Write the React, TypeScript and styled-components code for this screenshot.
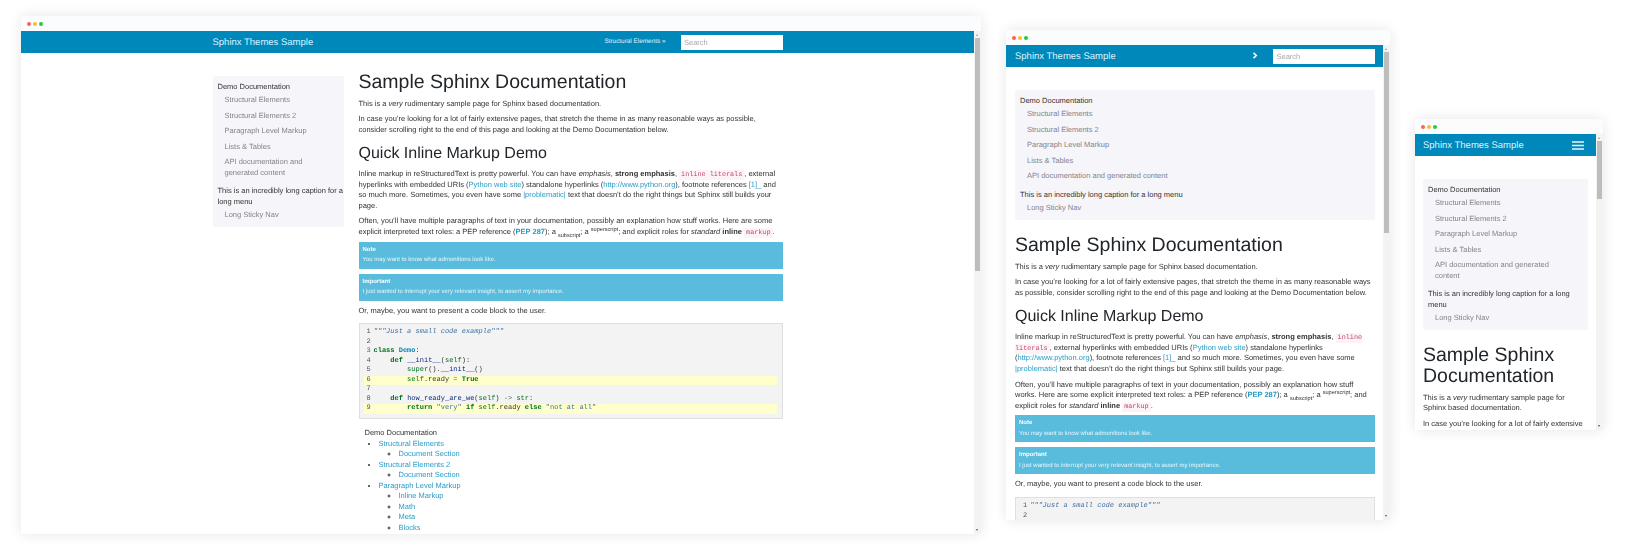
import * as React from "react"
import styled, { createGlobalStyle } from "styled-components"

type Layout = "desktop" | "tablet" | "phone"

const GlobalStyle = createGlobalStyle`
    html, body {
        margin: 0;
        padding: 0;
        background: #fff;
    }
    body {
        width: 1625px;
        height: 550px;
        overflow: hidden;
        font-family: "Liberation Sans", Arial, sans-serif;
        font-size: 7.5px;
        line-height: 10.5px;
        color: #333;
        text-rendering: geometricPrecision;
    }
`

const Stage = styled.div`
    display: flex;
    align-items: flex-start;
    gap: 25px;
    padding-left: 21px;
`

const Frame = styled.div<{ $top: number; $width: number; $height: number }>`
    flex: none;
    display: flex;
    flex-direction: column;
    margin-top: ${(p) => p.$top}px;
    width: ${(p) => p.$width}px;
    height: ${(p) => p.$height}px;
    background: #fff;
    border-radius: 4px 4px 0 0;
    box-shadow: 0 0 14px rgba(0, 0, 0, 0.1);
    overflow: hidden;
    filter: blur(0.3px);
`

const Chrome = styled.div`
    flex: none;
    display: flex;
    align-items: center;
    gap: 1.8px;
    height: 15px;
    padding-left: 6px;
    background: #fbfcfd;
`

const Dot = styled.span<{ $color: string }>`
    width: 4px;
    height: 4px;
    border-radius: 50%;
    background: ${(p) => p.$color};
`

const FrameBody = styled.div`
    flex: 1;
    min-height: 0;
    display: flex;
`

const Viewport = styled.div`
    flex: 1;
    min-width: 0;
    overflow: hidden;
`

const ScrollTrack = styled.div`
    flex: none;
    position: relative;
    width: 7px;
    background: #f3f3f3;
`

const ScrollThumb = styled.div<{ $height: number }>`
    margin: 7px 0 0 1px;
    width: 5px;
    height: ${(p) => p.$height}px;
    background: #bdbdbd;
`

const ScrollArrow = styled.span<{ $down?: boolean }>`
    position: absolute;
    left: 2px;
    ${(p) => (p.$down ? "bottom: 3px;" : "top: 3px;")}
    border-left: 1.5px solid transparent;
    border-right: 1.5px solid transparent;
    ${(p) => (p.$down ? "border-top: 2px solid #555;" : "border-bottom: 2px solid #999;")}
`

const Header = styled.header<{ $layout: Layout }>`
    height: 22px;
    padding: 0 8px;
    background: #0088ba;
    ${(p) => (p.$layout === "tablet" ? "padding: 0 8px 0 9px;" : "")}
`

const HeaderInner = styled.div<{ $layout: Layout }>`
    display: flex;
    align-items: center;
    height: 100%;
    ${(p) => (p.$layout === "desktop" ? "width: 570px; margin: 0 auto;" : "")}
`

const Brand = styled.a`
    margin: 2px auto 0 0;
    font-size: 9.5px;
    color: #d9f3ff;
`

const NavLink = styled.a`
    margin-right: 15px;
    font-size: 6.4px;
    color: #e3f4fb;
`

const Chevron = styled.svg`
    flex: none;
    margin: -2px 15px 0 0;
    width: 6px;
    height: 7px;
`

const SearchBox = styled.input`
    all: unset;
    box-sizing: border-box;
    width: 102px;
    height: 15px;
    padding: 0 3.5px;
    background: #fff;
    font-size: 7.5px;

    &::placeholder {
        color: #a8a8a8;
    }
`

const Burger = styled.svg`
    flex: none;
    width: 12px;
    height: 9px;
    margin-right: 4.5px;
`

const PageBody = styled.div<{ $layout: Layout }>`
    display: grid;
    grid-template-columns: minmax(0, 1fr);
    padding: 23px 8px 0;
    ${(p) => p.$layout === "desktop" && "grid-template-columns: 131px 424px; column-gap: 15px; width: 570px; margin: 0 auto; padding: 23px 0 0;"}
    ${(p) => p.$layout === "tablet" && "padding: 23px 8px 0 9px; row-gap: 19.5px;"}
    ${(p) => p.$layout === "phone" && "row-gap: 19.5px;"}
`

const Sidebar = styled.nav`
    align-self: start;
    padding: 6px 0 4px 5px;
    background: #f6f5fa;
    border-radius: 2px;
`

const Caption = styled.div`
    color: #333;
    margin-top: 5.7px;

    &:first-child {
        margin-top: 0;
    }
`

const SideItem = styled.a`
    display: block;
    padding: 2.5px 15px 2.5px 7px;
    color: #85838d;
`

const Main = styled.main`
    min-width: 0;
`

const H1 = styled.h1`
    margin: -4px 0 5.5px;
    font-size: 19.5px;
    line-height: 21px;
    font-weight: 400;
    color: #212529;
`

const H2 = styled.h2`
    margin: 9px 0 4.75px;
    font-size: 16px;
    line-height: 20px;
    font-weight: 400;
    color: #212529;
`

const P = styled.p`
    margin: 0 0 5.3px;
`

const Link = styled.a`
    color: #2a9dc7;
`

const PepLink = styled(Link)`
    font-weight: 700;
`

const Literal = styled.code`
    padding: 1px 2px;
    background: #fbf3f5;
    color: #c7456e;
    font-family: "Liberation Mono", monospace;
    font-size: 6.8px;
    line-height: 0;
    border-radius: 1px;
`

const Sub = styled.sub`
    font-size: 5.6px;
    line-height: 0;
`

const Sup = styled.sup`
    font-size: 5.6px;
    line-height: 0;
`

const Admonition = styled.div`
    box-sizing: border-box;
    height: 27px;
    margin: -1px 0 5px;
    padding: 3px 4px 0;
    background: #5abcdc;
    color: #e6f6fb;
    font-size: 6px;

    & + & {
        margin-top: 0;
    }
`

const AdmonitionTitle = styled.div`
    font-weight: 700;
    color: #f6fcfe;
`

const CodeBlock = styled.pre`
    margin: 7px 0 0;
    padding: 4.25px 5px 4.25px 4px;
    background: #f3f3f4;
    border: 1px solid #dfdfdf;
    font-family: "Liberation Mono", monospace;
    font-size: 7px;
    line-height: 9.5px;
    color: #333;
    overflow: hidden;
`

const CodeLine = styled.div<{ $hl?: boolean }>`
    white-space: pre;
    min-height: 9.5px;
    background: ${(p) => (p.$hl ? "#ffffcc" : "transparent")};
`

const LineNo = styled.span`
    display: inline-block;
    width: 7px;
    padding-left: 3px;
    color: #555;
`

const Kw = styled.span`
    color: #007020;
    font-weight: 700;
`

const Cls = styled.span`
    color: #0e84b5;
    font-weight: 700;
`

const Fn = styled.span`
    color: #06287e;
`

const Bi = styled.span`
    color: #007020;
`

const Str = styled.span`
    color: #4070a0;
`

const Doc = styled(Str)`
    font-style: italic;
`

const Op = styled.span`
    color: #666;
`

const Toc = styled.div`
    margin-top: 9px;
    padding-left: 6px;
`

const TocTitle = styled.div`
    color: #333;
`

const TocList = styled.ul`
    margin: 0;
    padding-left: 14px;
    list-style: disc;

    & & {
        padding-left: 20px;
        list-style: circle;
    }
`

const code = (
    <CodeBlock>
        <CodeLine><LineNo>1</LineNo><Doc>"""Just a small code example"""</Doc></CodeLine>
        <CodeLine><LineNo>2</LineNo></CodeLine>
        <CodeLine><LineNo>3</LineNo><Kw>class</Kw> <Cls>Demo</Cls>:</CodeLine>
        <CodeLine><LineNo>4</LineNo>    <Kw>def</Kw> <Fn>__init__</Fn>(<Bi>self</Bi>):</CodeLine>
        <CodeLine><LineNo>5</LineNo>        <Bi>super</Bi>().<Fn>__init__</Fn>()</CodeLine>
        <CodeLine $hl><LineNo>6</LineNo>        <Bi>self</Bi>.ready <Op>=</Op> <Kw>True</Kw></CodeLine>
        <CodeLine><LineNo>7</LineNo></CodeLine>
        <CodeLine><LineNo>8</LineNo>    <Kw>def</Kw> <Fn>how_ready_are_we</Fn>(<Bi>self</Bi>) <Op>-&gt;</Op> <Bi>str</Bi>:</CodeLine>
        <CodeLine $hl><LineNo>9</LineNo>        <Kw>return</Kw> <Str>"very"</Str> <Kw>if</Kw> <Bi>self</Bi>.ready <Kw>else</Kw> <Str>"not at all"</Str></CodeLine>
    </CodeBlock>
)

const Page: React.FC<{ layout: Layout }> = ({ layout }) => (
    <>
        <Header $layout={layout}>
            <HeaderInner $layout={layout}>
                <Brand>Sphinx Themes Sample</Brand>
                {layout === "desktop" && <NavLink>Structural Elements »</NavLink>}
                {layout === "tablet" && (
                    <Chevron viewBox="0 0 6 7">
                        <path d="M1.5 .8 4.3 3.5 1.5 6.2" fill="none" stroke="#f2fbff" strokeWidth="1.6" />
                    </Chevron>
                )}
                {layout === "phone" ? (
                    <Burger viewBox="0 0 12 9">
                        <path d="M0 1h12M0 4.5h12M0 8h12" stroke="#e6f6fc" strokeWidth="1.3" />
                    </Burger>
                ) : (
                    <SearchBox type="search" placeholder="Search" />
                )}
            </HeaderInner>
        </Header>
        <PageBody $layout={layout}>
            <Sidebar>
                <Caption>Demo Documentation</Caption>
                <SideItem>Structural Elements</SideItem>
                <SideItem>Structural Elements 2</SideItem>
                <SideItem>Paragraph Level Markup</SideItem>
                <SideItem>Lists &amp; Tables</SideItem>
                <SideItem>API documentation and generated content</SideItem>
                <Caption>This is an incredibly long caption for a long menu</Caption>
                <SideItem>Long Sticky Nav</SideItem>
            </Sidebar>
            <Main>
                <H1>Sample Sphinx Documentation</H1>
                <P>This is a <em>very</em> rudimentary sample page for Sphinx based documentation.</P>
                <P>In case you’re looking for a lot of fairly extensive pages, that stretch the theme in as many reasonable ways as possible, consider scrolling right to the end of this page and looking at the Demo Documentation below.</P>
                <H2>Quick Inline Markup Demo</H2>
                <P>
                    Inline markup in reStructuredText is pretty powerful. You can have <em>emphasis</em>, <strong>strong emphasis</strong>, <Literal>inline literals</Literal>, external hyperlinks with embedded URIs (<Link>Python web site</Link>) standalone hyperlinks (<Link>http://www.python.org</Link>), footnote references <Link>[1]_</Link> and so much more. Sometimes, you even have some <Link>|problematic|</Link> text that doesn’t do the right things but Sphinx still builds your page.
                </P>
                <P>
                    Often, you’ll have multiple paragraphs of text in your documentation, possibly an explanation how stuff works. Here are some explicit interpreted text roles: a PEP reference (<PepLink>PEP 287</PepLink>); a <Sub>subscript</Sub>; a <Sup>superscript</Sup>; and explicit roles for <em>standard</em> <strong>inline</strong> <Literal>markup</Literal>.
                </P>
                <Admonition>
                    <AdmonitionTitle>Note</AdmonitionTitle>
                    You may want to know what admonitions look like.
                </Admonition>
                <Admonition>
                    <AdmonitionTitle>Important</AdmonitionTitle>
                    I just wanted to interrupt your very relevant insight, to assert my importance.
                </Admonition>
                <P>Or, maybe, you want to present a code block to the user.</P>
                {code}
                <Toc>
                    <TocTitle>Demo Documentation</TocTitle>
                    <TocList>
                        <li><Link>Structural Elements</Link>
                            <TocList><li><Link>Document Section</Link></li></TocList>
                        </li>
                        <li><Link>Structural Elements 2</Link>
                            <TocList><li><Link>Document Section</Link></li></TocList>
                        </li>
                        <li><Link>Paragraph Level Markup</Link>
                            <TocList>
                                <li><Link>Inline Markup</Link></li>
                                <li><Link>Math</Link></li>
                                <li><Link>Meta</Link></li>
                                <li><Link>Blocks</Link></li>
                            </TocList>
                        </li>
                    </TocList>
                </Toc>
            </Main>
        </PageBody>
    </>
)

const BrowserWindow: React.FC<{
    layout: Layout
    top: number
    width: number
    height: number
    thumb: number
}> = ({ layout, top, width, height, thumb }) => (
    <Frame $top={top} $width={width} $height={height}>
        <Chrome>
            <Dot $color="#ff5f57" />
            <Dot $color="#ffbd2e" />
            <Dot $color="#28c940" />
        </Chrome>
        <FrameBody>
            <Viewport>
                <Page layout={layout} />
            </Viewport>
            <ScrollTrack>
                <ScrollArrow />
                <ScrollThumb $height={thumb} />
                <ScrollArrow $down />
            </ScrollTrack>
        </FrameBody>
    </Frame>
)

export default function App() {
    return (
        <>
            <GlobalStyle />
            <Stage>
                <BrowserWindow layout="desktop" top={16} width={960} height={518} thumb={233} />
                <BrowserWindow layout="tablet" top={30} width={384} height={490} thumb={181} />
                <BrowserWindow layout="phone" top={119} width={188} height={311} thumb={58} />
            </Stage>
        </>
    )
}
